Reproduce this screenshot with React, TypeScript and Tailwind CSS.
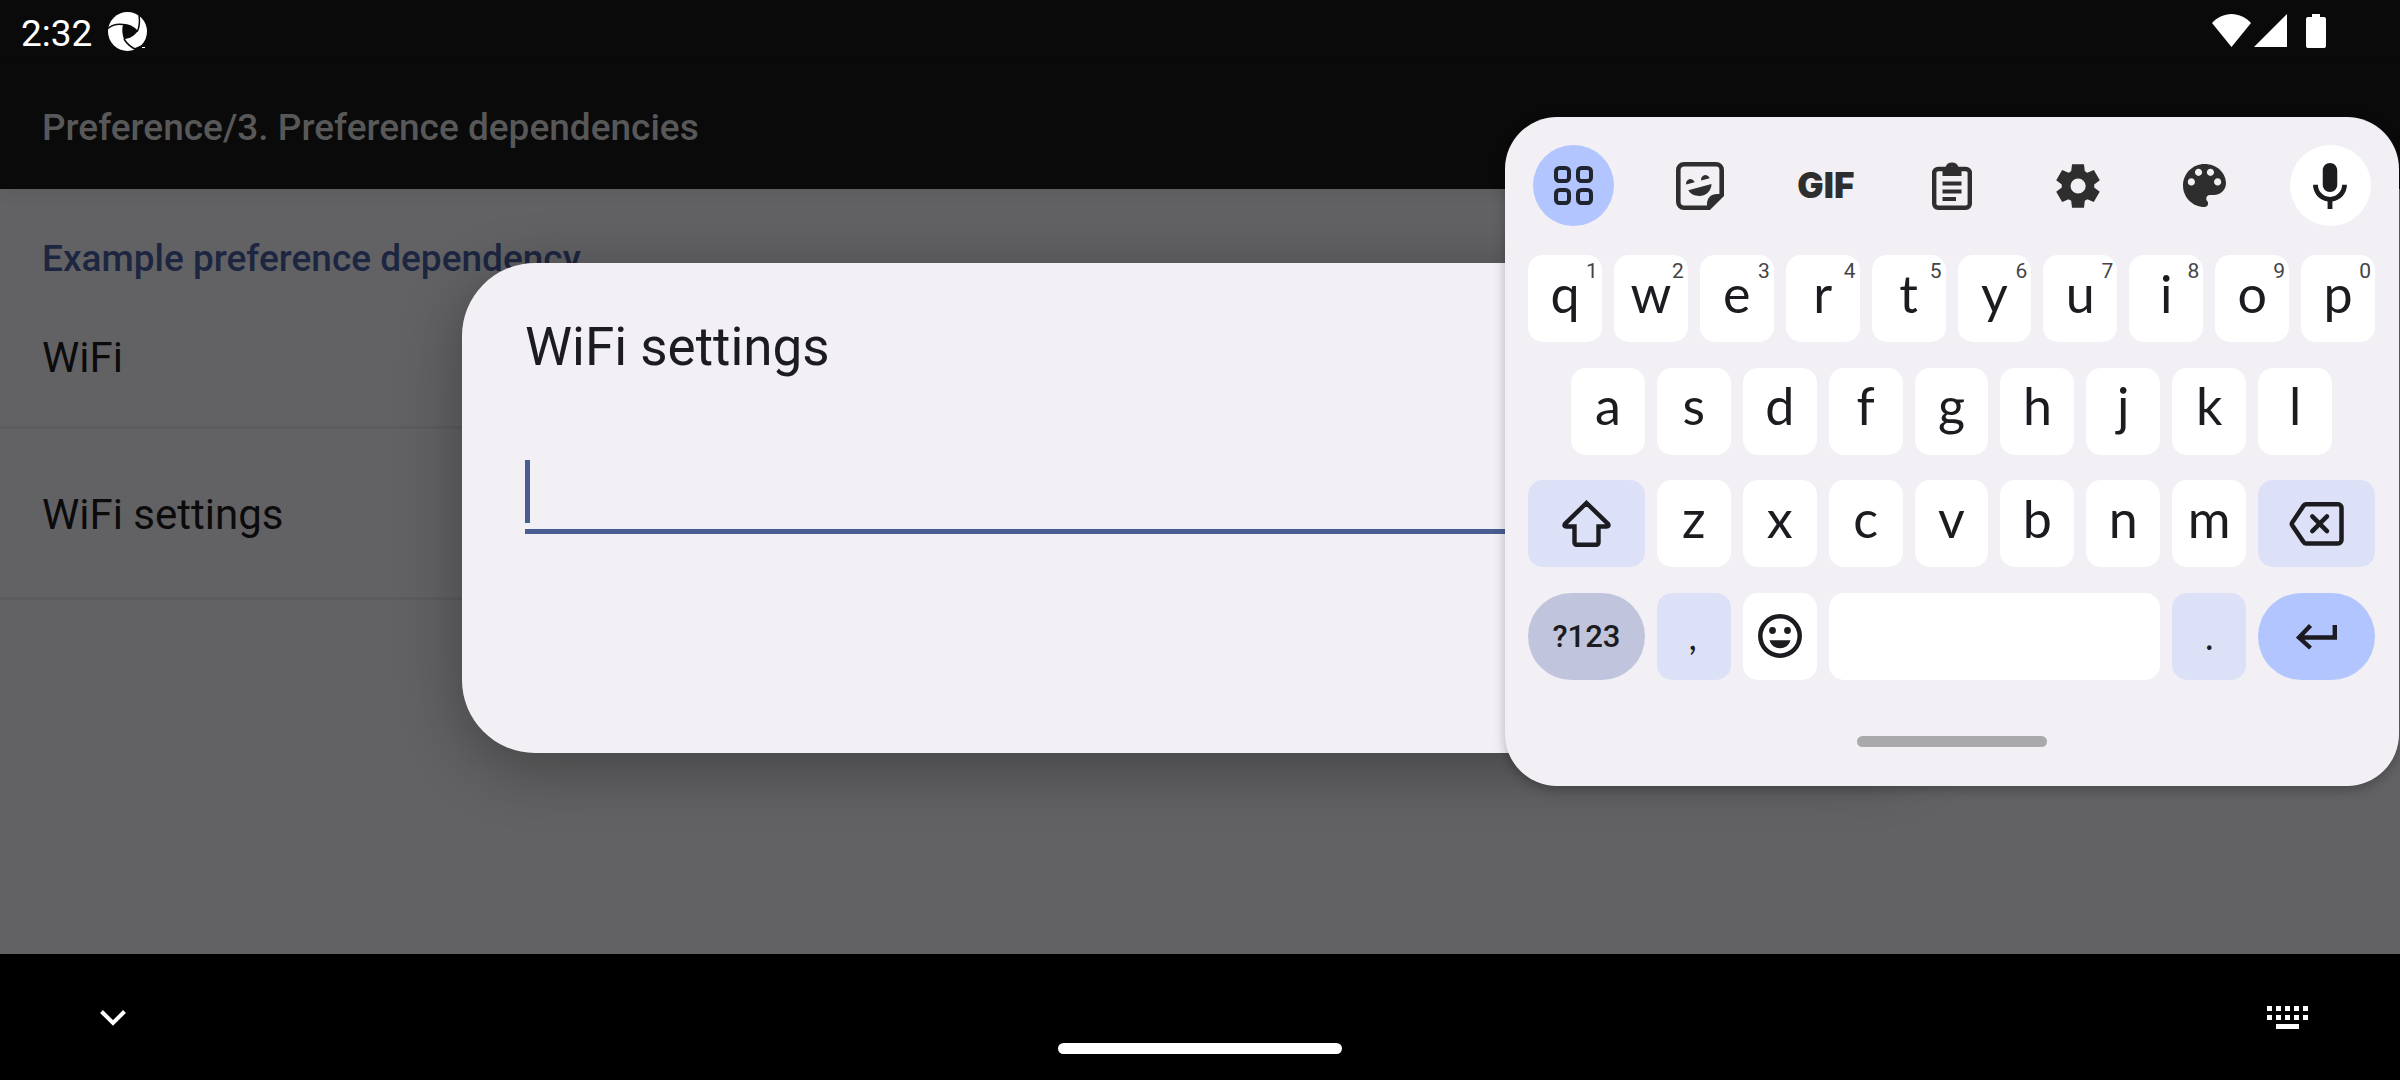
import type { ReactNode } from "react";

function AppLogo() {
  return (
    <svg viewBox="0 0 39 39" className="size-[39px]" aria-hidden="true">
      <circle cx="19.5" cy="19.5" r="19.5" fill="#fff" />
      <g fill="none" stroke="#0a0a0a" strokeWidth="1.500">
        <path d="M0 16.500C5 12 10 11.800 15 12.500" />
        <path d="M15 12.500C21 12.500 26 15.500 29.500 19.500" />
        <path d="M31 3C32 10 31.500 15 29.300 19.500" />
        <path d="M29 38C23 35.500 19 32 16 27" />
      </g>
      <path d="M15 12.500C21 12.500 26 15.500 29.500 19.500C26 24 22 26.500 16 27.200C14 22 13.800 17 15 12.500Z" fill="#0a0a0a" />
      <path d="M27 36L39 31V39H27Z" fill="#0a0a0a" />
      <rect x="34" y="35" width="3" height="1" fill="#fff" />
    </svg>
  );
}

function GridIcon() {
  return (
    <svg viewBox="0 0 39 39" className="size-[39px]" fill="none" stroke="#20242f" strokeWidth="4" aria-hidden="true">
      <rect x="2" y="2" width="13" height="13" rx="3.500" />
      <rect x="24" y="2" width="13" height="13" rx="3.500" />
      <rect x="2" y="24" width="13" height="13" rx="3.500" />
      <rect x="24" y="24" width="13" height="13" rx="3.500" />
    </svg>
  );
}

function StickerIcon() {
  return (
    <svg viewBox="0 0 48 48" className="size-12" fill="#2e2e2e" aria-hidden="true">
      <path d="M8 2.300H40a5.700 5.700 0 0 1 5.700 5.700V33L33 45.700H8a5.700 5.700 0 0 1-5.700-5.700V8a5.700 5.700 0 0 1 5.700-5.700Z" fill="none" stroke="#2e2e2e" strokeWidth="4.600" />
      <path d="M31 47V42C31 36 35 32 41 32H47L34 47Z" />
      <path d="M10.200 22.500A4.300 4.300 0 1 1 18.600 20.300Z" />
      <path d="M25.200 18.500A4.300 4.300 0 1 1 33.600 16.300Z" />
      <path d="M12.300 28.300L35.500 22C35.500 28.500 30 34 23.500 34C18.500 34 14.500 32 12.300 28.300Z" />
    </svg>
  );
}

function ClipboardIcon() {
  return (
    <svg viewBox="0 0 40 48" className="h-12 w-10" fill="#2e2e2e" aria-hidden="true">
      <rect x="2.200" y="7" width="35.600" height="38.800" rx="4" fill="none" stroke="#2e2e2e" strokeWidth="4.400" />
      <path fillRule="evenodd" d="M10.500 5H13.500A7 7 0 0 1 26.500 5H29.500V14H10.500ZM20 4.700A2.300 2.300 0 1 0 20 9.300A2.300 2.300 0 1 0 20 4.700Z" />
      <rect x="10.500" y="19.500" width="19" height="4" />
      <rect x="10.500" y="27.500" width="19" height="4" />
      <rect x="10.500" y="35" width="13.500" height="4" />
    </svg>
  );
}

function GearIcon() {
  return (
    <svg viewBox="0 -960 960 960" className="size-[52px]" fill="#2e2e2e" aria-hidden="true">
      <path d="m370-80-16-128q-13-5-24.500-12T307-235l-119 50L78-375l103-78q-1-7-1-13.500v-27q0-6.500 1-13.500L78-585l110-190 119 50q11-8 23-15t24-12l16-128h220l16 128q13 5 24.500 12t22.500 15l119-50 110 190-103 78q1 7 1 13.500v27q0 6.500-2 13.500l103 78-110 190-118-50q-11 8-23 15t-24 12L590-80H370Zm112-260q58 0 99-41t41-99q0-58-41-99t-99-41q-59 0-99.500 41T342-480q0 58 40.500 99t99.500 41Z" />
    </svg>
  );
}

function PaletteIcon() {
  return (
    <svg viewBox="3 3 18 18" className="size-[43px]" fill="#2e2e2e" aria-hidden="true">
      <path d="M12 3c-4.970 0-9 4.030-9 9s4.030 9 9 9c.83 0 1.500-.67 1.500-1.500 0-.39-.15-.74-.39-1.010-.23-.26-.38-.61-.38-.99 0-.83.67-1.500 1.500-1.500H16c2.760 0 5-2.240 5-5 0-4.420-4.030-8-9-8zm-5.500 9c-.83 0-1.500-.67-1.500-1.500S5.670 9 6.500 9 8 9.670 8 10.500 7.330 12 6.500 12zm3-4C8.670 8 8 7.330 8 6.500S8.670 5 9.500 5s1.500.67 1.500 1.500S10.330 8 9.500 8zm5 0c-.83 0-1.500-.67-1.500-1.500S13.670 5 14.500 5s1.500.67 1.500 1.500S15.330 8 14.500 8zm3 4c-.83 0-1.500-.67-1.500-1.500S16.670 9 17.500 9s1.500.67 1.500 1.500-.67 1.500-1.500 1.500z" />
    </svg>
  );
}

function MicIcon() {
  return (
    <svg viewBox="5 2 14 19" className="h-[46px] w-[34px]" fill="#1b1b20" aria-hidden="true">
      <path d="M12 14c1.660 0 3-1.340 3-3V5c0-1.660-1.340-3-3-3S9 3.340 9 5v6c0 1.660 1.340 3 3 3zm5-3c0 2.760-2.240 5-5 5s-5-2.240-5-5H5c0 3.530 2.610 6.430 6 6.920V21h2v-3.080c3.390-.49 6-3.390 6-6.920h-2z" />
    </svg>
  );
}

function ShiftIcon() {
  return (
    <svg viewBox="0 0 49 47" className="h-[47px] w-[49px]" fill="none" stroke="#1b1b20" strokeWidth="4.400" aria-hidden="true">
      <path d="M24.500 3L46 23.800Q47.500 26.500 44.500 26.500H36.500V42.800a2 2 0 0 1-2 2H14.500a2 2 0 0 1-2-2V26.500H4.500Q1.500 26.500 3 23.800Z" />
    </svg>
  );
}

function BackspaceIcon() {
  return (
    <svg viewBox="0 0 55 44" className="h-11 w-[55px]" fill="none" stroke="#1b1b20" strokeWidth="4.500" aria-hidden="true">
      <path d="M17 2.300H49a3.500 3.500 0 0 1 3.500 3.500V38a3.500 3.500 0 0 1-3.500 3.500H17a3 3 0 0 1-2.500-1.500L3.200 23.200a2.500 2.500 0 0 1 0-2.600L14.500 3.800A3 3 0 0 1 17 2.300Z" />
      <path d="M23.300 14.400L38 29.200M38 14.400L23.300 29.200" strokeLinecap="round" />
    </svg>
  );
}

function EmojiIcon() {
  return (
    <svg viewBox="-22 -22 44 44" className="size-11" fill="#1b1b20" aria-hidden="true">
      <circle r="19.700" fill="none" stroke="#1b1b20" strokeWidth="4.500" />
      <circle cx="-7.500" cy="-5.500" r="3.400" />
      <circle cx="7.500" cy="-5.500" r="3.400" />
      <path d="M-10.500 4.300H10.500C9 9.500 5 12.300 0 12.300S-9 9.500-10.500 4.300Z" />
    </svg>
  );
}

function EnterIcon() {
  return (
    <svg viewBox="0 0 42 27" className="h-[27px] w-[42px]" fill="none" stroke="#1b1b20" strokeWidth="4.400" aria-hidden="true">
      <path d="M38.800 2V14.500H4M14.500 2.500L3 14.500L14.500 25" />
    </svg>
  );
}

function Tool({ label, tone, children }: { label: string; tone?: string; children: ReactNode }) {
  return (
    <button type="button" aria-label={label} className={`flex size-[81px] items-center justify-center rounded-full ${tone ?? ""}`}>
      {children}
    </button>
  );
}

function Letter({ char, hint, start }: { char: string; hint?: string; start?: boolean }) {
  return (
    <button
      type="button"
      className={`relative col-span-2 flex items-center justify-center rounded-[15px] bg-white pb-3 text-[52px] leading-none ${start ? "col-start-2" : ""}`}
    >
      {char}
      {hint && (
        <span className="absolute top-1 right-1 font-[Roboto,sans-serif] text-[21px] leading-6 text-[#444447]">{hint}</span>
      )}
    </button>
  );
}

const ROW = "grid h-[87px] grid-cols-[repeat(20,minmax(0,1fr))] gap-x-3";

function Keyboard() {
  return (
    <section
      aria-label="Keyboard"
      className="absolute top-[117px] right-px w-[894px] rounded-[52px] bg-[#f2eff5] pt-7 pb-[39px] font-[Lato,sans-serif] text-[#1b1b20] shadow-[0_4px_12px_rgba(0,0,0,0.25)]"
    >
      <div className="flex justify-between px-7">
        <Tool label="Menu" tone="bg-[#b2c5ff]"><GridIcon /></Tool>
        <Tool label="Stickers"><StickerIcon /></Tool>
        <Tool label="GIF">
          <span className="font-[Inter,sans-serif] text-[35px] leading-none font-black text-[#2e2e2e]">GIF</span>
        </Tool>
        <Tool label="Clipboard"><ClipboardIcon /></Tool>
        <Tool label="Settings"><GearIcon /></Tool>
        <Tool label="Theme"><PaletteIcon /></Tool>
        <Tool label="Voice input" tone="bg-white"><MicIcon /></Tool>
      </div>

      <div className="mt-[29px] flex h-[425px] flex-col justify-between pr-6 pl-[23px]">
        <div className={ROW}>
          {"qwertyuiop".split("").map((c, i) => (
            <Letter key={c} char={c} hint={String((i + 1) % 10)} />
          ))}
        </div>
        <div className={ROW}>
          {"asdfghjkl".split("").map((c, i) => (
            <Letter key={c} char={c} start={i === 0} />
          ))}
        </div>
        <div className={ROW}>
          <button type="button" aria-label="Shift" className="col-span-3 flex items-center justify-center rounded-[15px] bg-[#dde1f8]">
            <ShiftIcon />
          </button>
          {"zxcvbnm".split("").map((c) => (
            <Letter key={c} char={c} />
          ))}
          <button type="button" aria-label="Backspace" className="col-span-3 flex items-center justify-center rounded-[15px] bg-[#dde1f8]">
            <BackspaceIcon />
          </button>
        </div>
        <div className={ROW}>
          <button type="button" className="col-span-3 flex items-center justify-center rounded-full bg-[#c0c5dd] font-[Roboto,sans-serif] text-[31px] leading-none font-medium">
            ?123
          </button>
          <button type="button" className="col-span-2 flex items-center justify-center rounded-[15px] bg-[#dde1f8] text-[36px] leading-none italic">,</button>
          <button type="button" aria-label="Emoji" className="col-span-2 flex items-center justify-center rounded-[15px] bg-white">
            <EmojiIcon />
          </button>
          <button type="button" aria-label="Space" className="col-span-8 rounded-[15px] bg-white" />
          <button type="button" className="col-span-2 flex items-center justify-center rounded-[15px] bg-[#dde1f8] text-[36px] leading-none">.</button>
          <button type="button" aria-label="Enter" className="col-span-3 flex items-center justify-center rounded-full bg-[#b2c5ff]">
            <EnterIcon />
          </button>
        </div>
      </div>

      <div className="mx-auto mt-14 h-[11px] w-[190px] rounded-full bg-[#a9a8ab]" />
    </section>
  );
}

function SettingsDialog() {
  return (
    <div className="absolute inset-x-0 top-[62px] bottom-[127px] flex items-center px-[462px]">
      <div
        role="dialog"
        aria-labelledby="dialog-title"
        className="w-full rounded-[73px] bg-[#f2eff5] px-[63px] pt-[54px] pb-[219px] shadow-[0_14px_64px_rgba(0,0,0,0.32)]"
      >
        <h2 id="dialog-title" className="text-[53px] leading-[60px] text-[#1b1b20]">WiFi settings</h2>
        <div className="relative mt-[68px]">
          <input
            type="text"
            aria-labelledby="dialog-title"
            className="block h-[89px] w-full border-b-[5px] border-[#495d92] bg-transparent text-[42px] caret-[#495d92] outline-none"
          />
          <span className="absolute top-[15px] left-0 h-[63px] w-[5px] bg-[#495d92]" />
        </div>
      </div>
    </div>
  );
}

export default function App() {
  return (
    <div className="relative flex min-h-screen flex-col overflow-hidden bg-[#626264] font-[Roboto,sans-serif]">
      <div className="flex h-[63px] items-center justify-between bg-[#0a0a0a] pr-[74px] pl-[21px] text-white">
        <div className="flex items-center gap-4">
          <span className="pt-1 text-[37px] leading-[42px]">2:32</span>
          <AppLogo />
        </div>
        <div className="flex items-center pb-[2px]" aria-hidden="true">
          <svg viewBox="0 0 39 33" className="h-[33px] w-[39px]" fill="currentColor">
            <path d="M0 9C5 3.500 12 0 19.500 0S34 3.500 39 9L19.500 33Z" />
          </svg>
          <svg viewBox="0 0 33 33" className="ml-[3px] size-[33px]" fill="currentColor">
            <path d="M33 0V33H0Z" />
          </svg>
          <svg viewBox="0 0 20 34" className="ml-[19px] h-[34px] w-5" fill="currentColor">
            <path d="M6 0H14V3H18a2 2 0 0 1 2 2V32a2 2 0 0 1-2 2H2a2 2 0 0 1-2-2V5a2 2 0 0 1 2-2H6Z" />
          </svg>
        </div>
      </div>

      <header className="flex h-[126px] items-center bg-[#0a0a0a] px-[42px] pt-1 shadow-[0_6px_14px_rgba(0,0,0,0.06)]">
        <h1 className="text-[37px] leading-[44px] font-medium text-[#585858]">Preference/3. Preference dependencies</h1>
      </header>

      <main className="flex-1">
        <h2 className="px-[42px] pt-12 pb-2 text-[37px] leading-[44px] font-medium text-[#1d2641]">
          Example preference dependency
        </h2>
        <ul className="text-[42px] leading-[50px] text-[#0b0b0c]">
          <li className="flex h-[140px] items-center border-b-[3px] border-[#5c5c5e] px-[42px]">WiFi</li>
          <li className="flex h-[171px] items-center border-b-[3px] border-[#5c5c5e] px-[42px] pt-1">WiFi settings</li>
        </ul>
      </main>

      <nav className="grid h-[126px] grid-cols-3 items-center bg-black pr-[92px] pl-[100px] text-white">
        <button type="button" aria-label="Hide keyboard" className="justify-self-start pt-[2px]">
          <svg viewBox="0 0 26 16" className="h-4 w-[26px]" fill="none" stroke="currentColor" strokeWidth="4">
            <path d="M1.500 1.500L13 13L24.500 1.500" />
          </svg>
        </button>
        <button type="button" aria-label="Home" className="mt-[63px] mr-2 h-[11px] w-[284px] justify-self-center rounded-full bg-white" />
        <button type="button" aria-label="Switch keyboard" className="justify-self-end">
          <svg viewBox="0 0 41 23" className="h-[23px] w-[41px]" fill="currentColor">
            <path d="M0 0h5v5h-5zM9 0h5v5h-5zM18 0h5v5h-5zM27 0h5v5h-5zM36 0h5v5h-5zM0 9h5v5h-5zM9 9h5v5h-5zM18 9h5v5h-5zM27 9h5v5h-5zM36 9h5v5h-5zM9 18h23v5h-23z" />
          </svg>
        </button>
      </nav>

      <SettingsDialog />
      <Keyboard />
    </div>
  );
}
